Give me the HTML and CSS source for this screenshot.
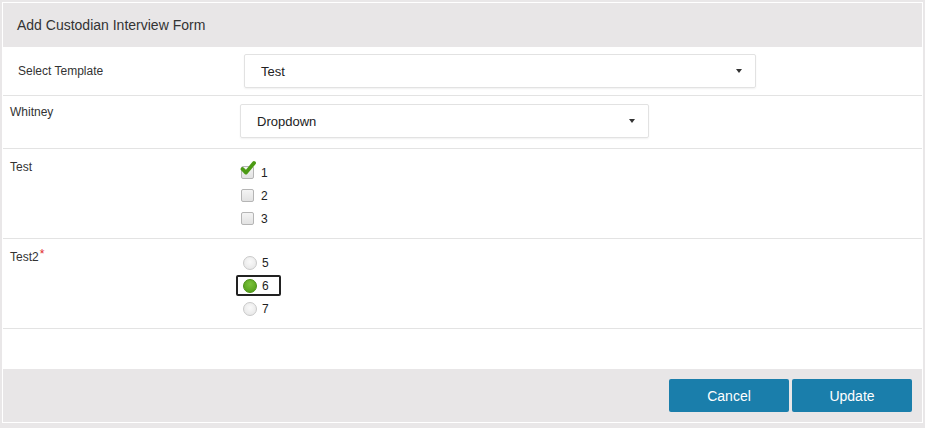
FILE: index.html
```html
<!DOCTYPE html>
<html>
<head>
<meta charset="utf-8">
<link rel="stylesheet" href="styles.css">
</head>
<body>
<div class="panel">
  <div class="header">Add Custodian Interview Form</div>
  <div class="row row-template">
    <div class="label">Select Template</div>
    <div class="control">
      <div class="select wide"><span>Test</span><i class="caret"></i></div>
    </div>
  </div>
  <div class="row row-q row-dd">
    <div class="label">Whitney</div>
    <div class="control">
      <div class="select mid"><span>Dropdown</span><i class="caret"></i></div>
    </div>
  </div>
  <div class="row row-q row-opts">
    <div class="label">Test</div>
    <div class="control options">
      <div class="opt"><span class="cb checked"><svg viewBox="0 0 16 16" width="16" height="16"><path d="M2.5 9 L6 12.6 L14 3" fill="none" stroke="#4c9a14" stroke-width="3.8" stroke-linecap="round" stroke-linejoin="round"/></svg></span><span class="txt">1</span></div>
      <div class="opt"><span class="cb"></span><span class="txt">2</span></div>
      <div class="opt"><span class="cb"></span><span class="txt">3</span></div>
    </div>
  </div>
  <div class="row row-q row-opts">
    <div class="label">Test2<span class="req">*</span></div>
    <div class="control options radios">
      <div class="opt"><span class="rd"></span><span class="txt">5</span></div>
      <div class="opt focus"><span class="rd on"></span><span class="txt">6</span></div>
      <div class="opt"><span class="rd"></span><span class="txt">7</span></div>
    </div>
  </div>
  <div class="spacer"></div>
  <div class="footer">
    <button class="btn">Cancel</button>
    <button class="btn">Update</button>
  </div>
</div>
</body>
</html>
```
FILE: styles.css
```css
html, body {
  margin: 0;
  padding: 0;
  background: #e9e7e8;
  font-family: "Liberation Sans", Arial, sans-serif;
  color: #333;
}
.panel {
  margin: 2px;
  width: 919px;
  height: 419px;
  padding: 1px;
  background: #fff;
  display: flex;
  flex-direction: column;
}
.header {
  height: 44px;
  flex: none;
  background: #e8e6e7;
  padding-left: 14px;
  font-size: 14px;
  line-height: 44px;
}
.row {
  display: grid;
  border-bottom: 1px solid #e3e3e3;
  flex: none;
}
.label {
  font-size: 12px;
}
.row-template {
  grid-template-columns: 241px 1fr;
  height: 48px;
  align-items: center;
}
.row-template .label {
  padding-left: 15px;
}
.row-q {
  grid-template-columns: 237px 1fr;
  align-items: start;
}
.row-q .label {
  padding-left: 7px;
  padding-top: 9px;
  line-height: 14px;
}
.row-opts .label {
  padding-top: 11px;
}
.row-dd {
  height: 52px;
}
.row-dd .control {
  padding-top: 8px;
}
.select {
  box-sizing: border-box;
  height: 34px;
  border: 1px solid #e2e2e2;
  border-radius: 2px;
  box-shadow: 0 1px 2px rgba(0,0,0,0.06);
  display: flex;
  align-items: center;
  justify-content: space-between;
  font-size: 13px;
  color: #222;
  padding: 0 13px 0 16px;
}
.select.wide { width: 512px; }
.select.mid { width: 409px; }
.caret {
  width: 0;
  height: 0;
  border-left: 3.5px solid transparent;
  border-right: 3.5px solid transparent;
  border-top: 4px solid #333;
}
.options {
  display: flex;
  flex-direction: column;
  height: 89px;
  box-sizing: border-box;
  padding-top: 12px;
}
.opt {
  display: flex;
  align-items: center;
  height: 23px;
  font-size: 12px;
  color: #222;
}
.cb {
  position: relative;
  box-sizing: border-box;
  width: 13px;
  height: 13px;
  margin-left: 1px;
  border: 1px solid #b5b5b5;
  border-radius: 2px;
  background: linear-gradient(#f4f4f4, #e2e2e2);
}
.cb svg {
  position: absolute;
  left: -2px;
  top: -7px;
}
.txt {
  margin-left: 7px;
}
.radios .txt {
  margin-left: 5px;
}
.rd {
  box-sizing: border-box;
  width: 14px;
  height: 14px;
  margin-left: 3px;
  border-radius: 50%;
  border: 1px solid #c9c9c9;
  background: radial-gradient(circle at 50% 40%, #fafafa, #e3e3e3);
}
.rd.on {
  border-color: #4a8f14;
  background: radial-gradient(circle at 50% 35%, #7cc23c, #4d9a14);
}
.opt.focus {
  box-sizing: border-box;
  width: 45px;
  height: 21px;
  margin: 1px 0 1px -4px;
  border: 2px solid #222;
  border-radius: 2px;
}
.opt.focus .rd { margin-left: 5px; }
.req {
  color: #e0262b;
  font-size: 12px;
  position: relative;
  top: -3px;
  margin-left: 1px;
}
.spacer {
  flex: 1;
}
.footer {
  height: 53px;
  flex: none;
  background: #e8e6e7;
  display: flex;
  justify-content: flex-end;
  align-items: center;
  gap: 3px;
  padding-right: 10px;
}
.btn {
  width: 120px;
  height: 33px;
  border: none;
  border-radius: 2px;
  background: #1a7eab;
  color: #fff;
  font-family: "Liberation Sans", Arial, sans-serif;
  font-size: 14px;
  padding: 0;
}
```
